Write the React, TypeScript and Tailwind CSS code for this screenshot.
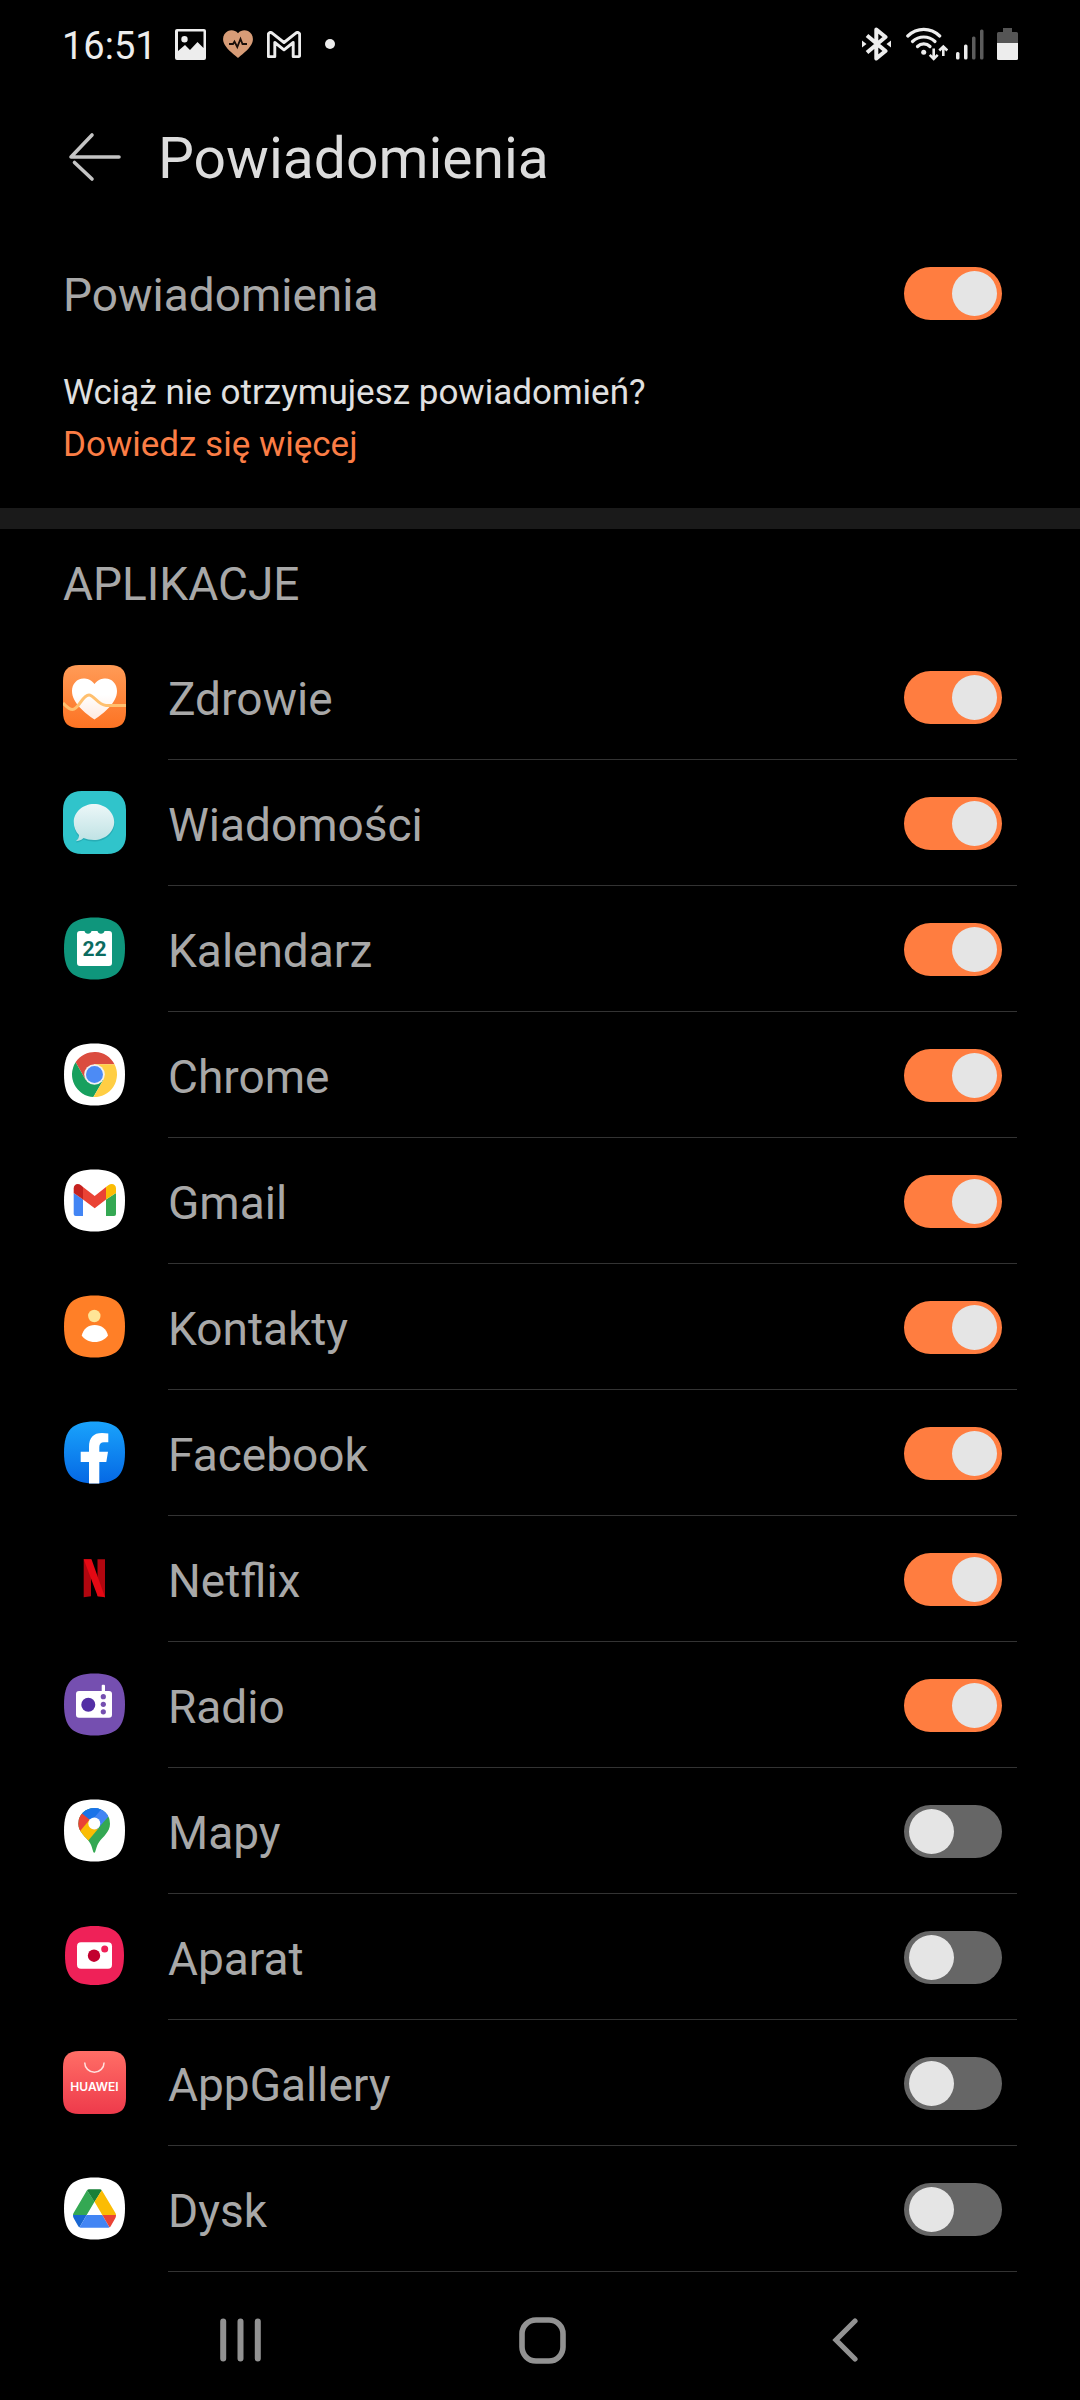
import { useState, type ReactNode } from "react";

type AppDto = {
  id: string;
  name: string;
  enabled: boolean;
  icon: ReactNode;
};

const SQUIRCLE =
  "M31.5 .5C53.500 .5 62 9 62 31.5S53.500 62.5 31.5 62.5 1 54 1 31.5 9.500 .5 31.5 .5Z";

function IconFrame({ children }: { children: ReactNode }) {
  return (
    <svg viewBox="0 0 63 63" className="size-[63px] shrink-0" aria-hidden="true">
      {children}
    </svg>
  );
}

function HealthIcon() {
  return (
    <IconFrame>
      <defs>
        <linearGradient id="health-bg" x1="0" y1="0" x2="0" y2="1">
          <stop offset="0" stopColor="#ff9b57" />
          <stop offset="1" stopColor="#fd7323" />
        </linearGradient>
        <linearGradient id="health-heart" x1="0" y1="0" x2="0" y2="1">
          <stop offset="0.4" stopColor="#ffffff" />
          <stop offset="1" stopColor="#ffe9df" />
        </linearGradient>
      </defs>
      <path
        d="M16 0H47C58 0 63 5 63 16V47C63 58 58 63 47 63H16C5 63 0 58 0 47V16C0 5 5 0 16 0Z"
        fill="url(#health-bg)"
      />
      <path
        d="M31.5 19C28 14.500 24 13.500 20.500 13.500C14 13.500 9 19 9 26C9 38 22 48 31.500 54.500C41 48 54 38 54 26C54 19 49 13.500 42.500 13.500C39 13.500 35 14.500 31.500 19Z"
        fill="url(#health-heart)"
      />
      <path
        d="M0 38C4 42 6 44.500 9.500 44.500C16 44.500 19 30 26 30C31 30 35 40 43 40.500H63"
        fill="none"
        stroke="#ffc06f"
        strokeWidth="3"
      />
    </IconFrame>
  );
}

function MessagesIcon() {
  return (
    <IconFrame>
      <defs>
        <linearGradient id="msg-bubble" x1="0" y1="0" x2="0" y2="1">
          <stop offset="0" stopColor="#ecf7f8" />
          <stop offset="1" stopColor="#bfe2e4" />
        </linearGradient>
      </defs>
      <path
        d="M19 0H44C56 0 63 7 63 19V44C63 56 56 63 44 63H19C7 63 0 56 0 44V19C0 7 7 0 19 0Z"
        fill="#30c4cb"
      />
      <path
        d="M31 14.500C42 14.500 51.500 22 51.500 32.500C51.500 43 42 50.500 31 50.500C27 50.500 23.500 49.800 20.500 48.500C18 50.500 15 51.500 13 51.500C14.500 50 15.500 48 15.500 45.500C12.500 42 11 38 11 32.500C11 22 20 14.500 31 14.500Z"
        fill="#229fa8"
        opacity="0.6"
      />
      <path
        d="M31 13C42 13 51.200 21 51.200 31C51.200 41 42 49 31 49C27 49 23.500 48.300 20.500 47C18 49.500 15 50.200 13 50C15 48.500 16 46.500 16 44C12.500 40.500 10.800 36 10.800 31C10.800 21 20 13 31 13Z"
        fill="url(#msg-bubble)"
      />
    </IconFrame>
  );
}

function CalendarIcon() {
  return (
    <IconFrame>
      <path d={SQUIRCLE} fill="#0f967c" />
      <path
        d="M17 14H21.500A3.600 3.600 0 0 0 28.500 14H34.500A3.600 3.600 0 0 0 41.500 14H46Q49 14 49 17V46Q49 49 46 49H17Q14 49 14 46V17Q14 14 17 14Z"
        fill="#fff"
      />
      <text
        x="31.500"
        y="39"
        textAnchor="middle"
        className="font-['Roboto',sans-serif] text-[21px] font-bold"
        fill="#0b6b60"
      >
        22
      </text>
    </IconFrame>
  );
}

function ChromeIcon() {
  const segment = "M0 -10.300H20A22.500 22.500 0 0 0 -18.900 -12.200L-8.920 5.150Z";

  return (
    <IconFrame>
      <path d={SQUIRCLE} fill="#fff" />
      <g transform="translate(31.5 31.5)">
        <path d={segment} fill="#db4c3f" />
        <path d={segment} fill="#17a05e" transform="rotate(-120)" />
        <path d={segment} fill="#ffce44" transform="rotate(120)" />
        <circle r="10.300" fill="#f1f1f1" />
        <circle r="8.500" fill="#4c8bf5" />
      </g>
    </IconFrame>
  );
}

function GmailIcon() {
  return (
    <IconFrame>
      <path d={SQUIRCLE} fill="#fff" />
      <path d="M10.700 24L20 30.500V47H12.700Q10.700 47 10.700 45Z" fill="#4285f4" />
      <path d="M53 24L43 30.500V47H51Q53 47 53 45Z" fill="#34a853" />
      <path d="M20 18L31.700 27L43 18V30.500L31.700 39.300L20 30.500Z" fill="#ea4335" />
      <path
        d="M20 30.600L10.700 24V19.500C10.700 15 15 13.800 18 16.300L20 18Z"
        fill="#c5221f"
      />
      <path
        d="M43 30.600L53 24V19.500C53 15 48.500 13.800 45.300 16.300L43 18Z"
        fill="#fbbc04"
      />
    </IconFrame>
  );
}

function ContactsIcon() {
  return (
    <IconFrame>
      <path d={SQUIRCLE} fill="#ff7f27" />
      <circle cx="31.300" cy="21" r="6.200" fill="#ffe596" />
      <path
        d="M18.700 40.500C20.500 34 25 30 31.700 30S43.500 34 45 40.500C42 44.500 37.500 47 31.700 47S21.500 44.500 18.700 40.500Z"
        fill="#fff"
      />
    </IconFrame>
  );
}

function FacebookIcon() {
  return (
    <IconFrame>
      <defs>
        <linearGradient id="fb-bg" x1="0" y1="0" x2="0" y2="1">
          <stop offset="0" stopColor="#19a3fc" />
          <stop offset="1" stopColor="#0568e4" />
        </linearGradient>
      </defs>
      <path d={SQUIRCLE} fill="url(#fb-bg)" />
      <path
        d="M26 62.500V41H17.700V30.800H26V26C26 16.500 30.500 12 39 12Q42.500 12 45.300 12.600V21.200H41Q36.300 21.200 36.300 26V30.800H45L43.300 41H36.300V62.500Z"
        fill="#fff"
      />
    </IconFrame>
  );
}

function NetflixIcon() {
  return (
    <IconFrame>
      <path d="M20.700 12.300H28V49.300L20.700 50.200Z" fill="#b1060f" />
      <path d="M34.500 12.300H42V50.200L34.500 49.300Z" fill="#b1060f" />
      <path d="M20.700 12.300H28.500L42 50.200Q38 49.300 34.700 49.300Z" fill="#e50914" />
    </IconFrame>
  );
}

function RadioIcon() {
  return (
    <IconFrame>
      <path d={SQUIRCLE} fill="#754fb0" />
      <rect x="13" y="18" width="36" height="26.700" rx="3" fill="#fff" />
      <rect x="38.700" y="11.800" width="3.300" height="9" rx="1" fill="#fff" />
      <circle cx="25.300" cy="31.700" r="7" fill="#532ea5" />
      <circle cx="40.300" cy="23.700" r="2.600" fill="#754fb0" />
      <circle cx="40.300" cy="31.300" r="2.600" fill="#754fb0" />
      <circle cx="40.300" cy="38.800" r="2.600" fill="#754fb0" />
    </IconFrame>
  );
}

function MapsIcon() {
  return (
    <IconFrame>
      <defs>
        <clipPath id="maps-pin">
          <path d="M31.300 53.700C29.500 53.700 30 48 26 42.500C23 38 15.300 33 15.300 24.700A15.850 15.700 0 0 1 47 24.700C47 33 39.500 38 36.500 42.500C32.500 48 33 53.700 31.300 53.700Z" />
        </clipPath>
      </defs>
      <path d={SQUIRCLE} fill="#fff" />
      <g clipPath="url(#maps-pin)">
        <path d="M10 5H55V58H10Z" fill="#34a853" />
        <path d="M31.300 24.500L47.500 15.200V5H30Z" fill="#4285f4" />
        <path d="M10 5H43L26.500 24.500L19 14.400Z" fill="#1a73e8" />
        <path d="M10 6L19 14.400L27 21L17 33L8 40Z" fill="#ea4335" />
        <path d="M16.500 32.700L27 20.300L36 28.700L24.500 42.500L12 45Z" fill="#fbbc04" />
        <path d="M43 5L27.500 23.200L34 30.500L47.500 15.200V5Z" fill="#4285f4" />
      </g>
      <circle cx="31.300" cy="24.400" r="6" fill="#fff" />
    </IconFrame>
  );
}

function CameraIcon() {
  return (
    <IconFrame>
      <path
        d="M31.500 1C52.500 1 61 9 61 30.500S52.500 60 31.500 60 2 52 2 30.500 10.500 1 31.500 1Z"
        fill="#ef2158"
      />
      <rect x="14" y="17.300" width="35" height="26.500" rx="4" fill="#fff" />
      <circle cx="31" cy="30.700" r="6.200" fill="#c2002f" />
      <circle cx="41.700" cy="24" r="3.500" fill="#ef2158" />
    </IconFrame>
  );
}

function AppGalleryIcon() {
  return (
    <IconFrame>
      <defs>
        <linearGradient id="gallery-bg" x1="0" y1="0" x2="0" y2="1">
          <stop offset="0" stopColor="#ff6e66" />
          <stop offset="1" stopColor="#ee3a4b" />
        </linearGradient>
      </defs>
      <path
        d="M16 0H47C58 0 63 5 63 16V47C63 58 58 63 47 63H16C5 63 0 58 0 47V16C0 5 5 0 16 0Z"
        fill="url(#gallery-bg)"
      />
      <path
        d="M21.700 11.500A9.700 9.700 0 0 0 41.100 11.500"
        fill="none"
        stroke="#ffe1de"
        strokeWidth="1.500"
      />
      <text
        x="31.500"
        y="40"
        textAnchor="middle"
        className="font-['Inter',sans-serif] text-[12px] font-semibold"
        fill="#fff"
      >
        HUAWEI
      </text>
    </IconFrame>
  );
}

function DriveIcon() {
  return (
    <IconFrame>
      <path d={SQUIRCLE} fill="#fff" />
      <path d="M24 13.300L31.500 24.700L23.700 38H10Q10 37 10.600 36Z" fill="#34a853" />
      <path d="M24 13.300Q25 12.300 26 12.300H37Q38 12.300 38.800 13.300L31.500 25Z" fill="#188038" />
      <path d="M38.800 13.300L52.400 36Q53 37 53 38H39.300L31.500 24.700Z" fill="#fbbc04" />
      <path d="M10 38H23.700L16.500 50.200Q15.500 49.700 15 48.700L10.600 41Q10 39.800 10 38Z" fill="#1967d2" />
      <path d="M23.700 38H39.300L46.500 50.200Q45.500 50.700 44.500 50.700H18.500Q17.500 50.700 16.500 50.200Z" fill="#4285f4" />
      <path d="M39.300 38H53Q53 39.800 52.400 41L48 48.700Q47.500 49.700 46.500 50.200Z" fill="#ea4335" />
    </IconFrame>
  );
}

const initialApps: AppDto[] = [
  { id: "health", name: "Zdrowie", enabled: true, icon: <HealthIcon /> },
  { id: "messages", name: "Wiadomości", enabled: true, icon: <MessagesIcon /> },
  { id: "calendar", name: "Kalendarz", enabled: true, icon: <CalendarIcon /> },
  { id: "chrome", name: "Chrome", enabled: true, icon: <ChromeIcon /> },
  { id: "gmail", name: "Gmail", enabled: true, icon: <GmailIcon /> },
  { id: "contacts", name: "Kontakty", enabled: true, icon: <ContactsIcon /> },
  { id: "facebook", name: "Facebook", enabled: true, icon: <FacebookIcon /> },
  { id: "netflix", name: "Netflix", enabled: true, icon: <NetflixIcon /> },
  { id: "radio", name: "Radio", enabled: true, icon: <RadioIcon /> },
  { id: "maps", name: "Mapy", enabled: false, icon: <MapsIcon /> },
  { id: "camera", name: "Aparat", enabled: false, icon: <CameraIcon /> },
  { id: "appgallery", name: "AppGallery", enabled: false, icon: <AppGalleryIcon /> },
  { id: "drive", name: "Dysk", enabled: false, icon: <DriveIcon /> },
];

export default function App() {
  const [allEnabled, setAllEnabled] = useState(true);
  const [apps, setApps] = useState<AppDto[]>(initialApps);

  function toggleApp(id: string) {
    setApps((prev) =>
      prev.map((a) => (a.id === id ? { ...a, enabled: !a.enabled } : a))
    );
  }

  return (
    <div className="flex min-h-screen flex-col bg-black font-['Roboto',sans-serif] text-[#a8a8a8]">
      <StatusBar />

      <header className="flex items-center gap-9 px-[68px] pt-[30px]">
        <button type="button" aria-label="Wstecz" className="shrink-0">
          <BackArrow />
        </button>
        <h1 className="pt-1 text-[57px] leading-[74px] text-[#dcdcdc]">
          Powiadomienia
        </h1>
      </header>

      <main className="flex-1">
        <section className="px-[63px] pt-[34px] pb-[37px]">
          <label
            htmlFor="all-notifications"
            className="flex h-[126px] items-center justify-between pr-[15px]"
          >
            <span className="pt-1 text-[46px] leading-[60px]">Powiadomienia</span>
            <Switch
              id="all-notifications"
              checked={allEnabled}
              onChange={() => setAllEnabled((v) => !v)}
            />
          </label>
          <p className="pt-[11px] text-[35px] leading-[52px] text-[#e0e0e0]">
            Wciąż nie otrzymujesz powiadomień?
          </p>
          <a href="#help" className="block text-[35px] leading-[52px] text-[#fb7d45]">
            Dowiedz się więcej
          </a>
        </section>

        <div className="h-[21px] bg-[#1a1a1a]" />

        <section>
          <h2 className="px-[63px] pt-[25px] pb-[20px] text-[46px] leading-[60px]">
            APLIKACJE
          </h2>
          <ul>
            {apps.map((app) => (
              <li key={app.id} className="px-[63px]">
                <label htmlFor={app.id} className="flex h-[126px] items-center gap-[42px]">
                  <span className="pb-[2px]">{app.icon}</span>
                  <span className="flex h-full flex-1 items-center justify-between border-b border-[#333333] pt-[2px] pr-[15px]">
                    <span className="pt-[2px] text-[46px] leading-[60px]">
                      {app.name}
                    </span>
                    <Switch
                      id={app.id}
                      checked={app.enabled}
                      onChange={() => toggleApp(app.id)}
                    />
                  </span>
                </label>
              </li>
            ))}
          </ul>
        </section>
      </main>

      <NavigationBar />
    </div>
  );
}

function Switch({
  id,
  checked,
  onChange,
}: {
  id: string;
  checked: boolean;
  onChange: () => void;
}) {
  return (
    <input
      id={id}
      type="checkbox"
      role="switch"
      checked={checked}
      onChange={onChange}
      className="h-[53px] w-[98px] shrink-0 appearance-none rounded-full bg-[#666666] px-[5px] py-1 before:block before:size-[45px] before:rounded-full before:bg-[#e5e5e5] checked:bg-[#ff7d40] checked:before:ml-[43px]"
    />
  );
}

function StatusBar() {
  return (
    <div className="flex h-[88px] items-center justify-between px-[62px] text-[#ededed]">
      <div className="flex items-center">
        <span className="pt-1 text-[38px] leading-[48px]">16:51</span>
        <svg viewBox="0 0 31 31" className="ml-[18px] size-[31px]" aria-hidden="true">
          <path
            fill="currentColor"
            fillRule="evenodd"
            d="M2 0H29Q31 0 31 2V29Q31 31 29 31H2Q0 31 0 29V2Q0 0 2 0ZM3 2.500V22L10 16L15 21L22.500 13L28.500 19V2.500ZM9.500 7A3.200 3.200 0 1 1 9.500 13.400A3.200 3.200 0 1 1 9.500 7Z"
          />
        </svg>
        <svg viewBox="0 0 30 28" className="ml-[17px] h-[28px] w-[30px]" aria-hidden="true">
          <path
            fill="#d79c77"
            d="M15 3.200C12 -.2 8 -.3 5 1C1 3 -.8 7.500 .5 12C2.500 18 9 23 15 28C21 23 27.500 18 29.500 12C30.800 7.500 29 3 25 1C22 -.3 18 -.2 15 3.200Z"
          />
          <path
            d="M6 14H10L11.500 11.500L14.300 17L17.500 9L19.500 14H24"
            fill="none"
            stroke="#1a0f0a"
            strokeWidth="1.800"
          />
        </svg>
        <svg viewBox="0 0 34 27" className="ml-[14px] h-[27px] w-[34px]" aria-hidden="true">
          <path
            d="M1.300 25.500V4C1.300 1.200 3.500 .8 5.500 2.300L17 11.500L28.500 2.300C30.500 .8 32.700 1.200 32.700 4V24Q32.700 25.600 31.300 25.600H26.200V11.500L17 18.800L7.800 11.500V25.600H2.700Q1.300 25.600 1.300 24Z"
            fill="none"
            stroke="currentColor"
            strokeWidth="2.900"
            strokeLinejoin="round"
          />
        </svg>
        <span className="ml-6 size-[10px] rounded-full bg-[#ededed]" />
      </div>

      <div className="flex items-center">
        <svg viewBox="0 0 29 34" className="h-[34px] w-[29px]" aria-hidden="true">
          <path
            d="M5 8.500L23.500 24L14.300 31.500V2.500L23.500 10L5 25.500"
            fill="none"
            stroke="currentColor"
            strokeWidth="4"
            strokeLinejoin="round"
          />
          <path d="M0 13.500L4.500 17L0 20.500ZM29 13.500L24.500 17L29 20.500Z" fill="currentColor" />
        </svg>
        <svg viewBox="0 0 42 34" className="ml-[15px] h-[34px] w-[42px]" aria-hidden="true">
          <g fill="none" stroke="currentColor" strokeWidth="3.200" strokeLinecap="round">
            <path d="M1.800 9C11 .2 24.500 .2 33.700 9" />
            <path d="M6.500 14.500C13 8.500 22.500 8.500 29 14.500" />
            <path d="M11.500 19.500C15 16 20.500 16 24 19.500" />
          </g>
          <circle cx="17.700" cy="25.300" r="2.500" fill="currentColor" />
          <path
            d="M27.700 21.500V31M23.700 27.800L27.700 31.800L31.700 27.800M37.300 29V20M33.300 23.500L37.300 19.500L41.300 23.500"
            fill="none"
            stroke="currentColor"
            strokeWidth="2.600"
          />
        </svg>
        <svg viewBox="0 0 28 34" className="ml-[8px] h-[34px] w-[28px]" aria-hidden="true">
          <rect x="0" y="25" width="3.500" height="7.500" rx="1.500" fill="currentColor" />
          <rect x="8" y="17.500" width="3.500" height="15" rx="1.500" fill="currentColor" />
          <rect x="16" y="9.500" width="3.500" height="23" rx="1.500" fill="#5c5c5c" />
          <rect x="24" y="2.500" width="3.500" height="30" rx="1.500" fill="#5c5c5c" />
        </svg>
        <svg viewBox="0 0 21 34" className="ml-[13px] h-[34px] w-[21px]" aria-hidden="true">
          <path d="M6 1H15V5H19.500Q21 5 21 6.500V17H0V6.500Q0 5 1.500 5H6Z" fill="#555555" />
          <path d="M0 16H21V31.500Q21 33 19.500 33H1.500Q0 33 0 31.500Z" fill="currentColor" />
        </svg>
      </div>
    </div>
  );
}

function BackArrow() {
  return (
    <svg viewBox="0 0 54 50" className="h-[50px] w-[54px]" aria-hidden="true">
      <g fill="none" stroke="#c4c4c4" strokeWidth="3.600" strokeLinecap="round" strokeLinejoin="round">
        <path d="M24 3L3 25H51" />
        <path d="M6.500 30.500L24 47" />
      </g>
    </svg>
  );
}

function NavigationBar() {
  return (
    <nav className="flex h-[128px] items-center pt-[8px] pr-[84px] pl-[89px] text-[#929292]">
      <button type="button" aria-label="Ostatnie" className="flex flex-1 justify-center">
        <svg viewBox="0 0 41 44" className="h-[44px] w-[41px]" aria-hidden="true">
          <path
            d="M3.200 3.500V40.500M20.500 3.500V40.500M37.800 3.500V40.500"
            stroke="currentColor"
            strokeWidth="6"
            strokeLinecap="round"
          />
        </svg>
      </button>
      <button type="button" aria-label="Ekran główny" className="flex flex-1 justify-center">
        <svg viewBox="0 0 47 47" className="size-[47px]" aria-hidden="true">
          <rect
            x="3"
            y="3"
            width="41"
            height="41"
            rx="14"
            fill="none"
            stroke="currentColor"
            strokeWidth="5.600"
          />
        </svg>
      </button>
      <button type="button" aria-label="Cofnij" className="flex flex-1 justify-center">
        <svg viewBox="0 0 26 44" className="h-[44px] w-[26px]" aria-hidden="true">
          <path
            d="M23 3L4 22L23 41"
            fill="none"
            stroke="currentColor"
            strokeWidth="5.200"
            strokeLinecap="round"
          />
        </svg>
      </button>
    </nav>
  );
}
